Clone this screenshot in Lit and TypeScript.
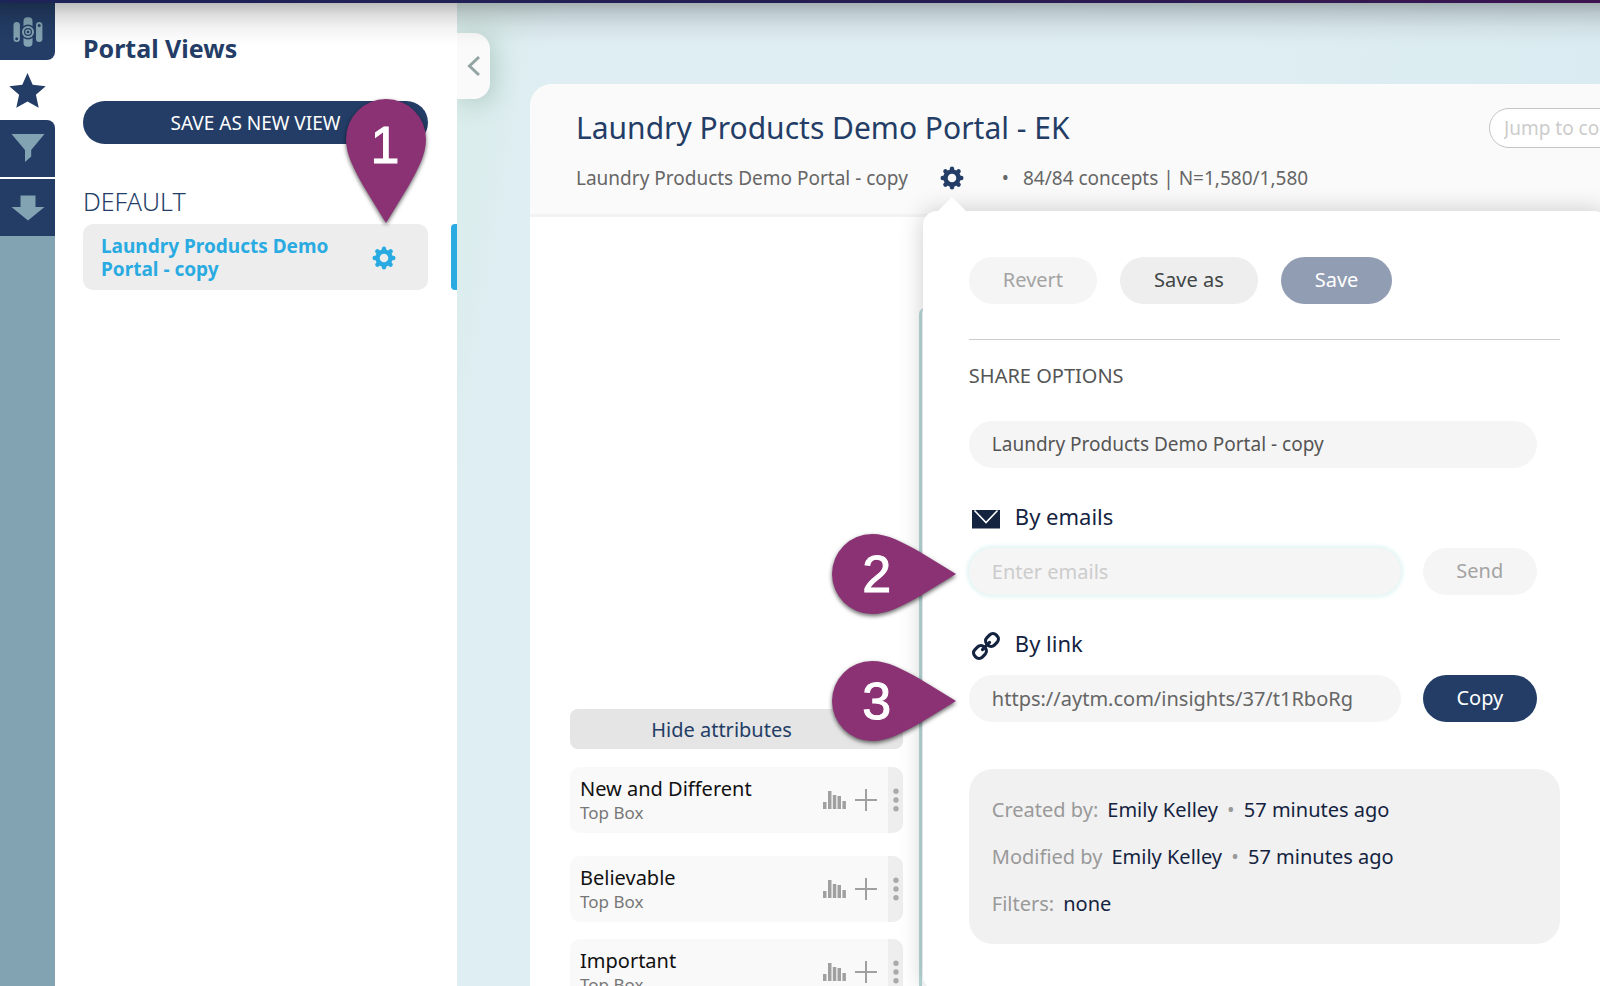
import { LitElement, html, css, svg, nothing } from "lit";
import { customElement, property } from "lit/decorators.js";

const teeth = [0, 45, 90, 135, 180, 225, 270, 315];

const gearIcon = html`<svg class="gear" viewBox="0 0 24 24" width="24" height="24" aria-hidden="true">
  <circle cx="12" cy="12" r="6.5" fill="none" stroke="currentColor" stroke-width="4.4" />
  ${teeth.map(
    (a) => svg`<path d="M12 5V2.7" stroke="currentColor" stroke-width="4.4" stroke-linecap="round" transform=${`rotate(${a} 12 12)`} />`
  )}
</svg>`;

const portalIcon = html`<svg viewBox="0 0 32 32" width="32" height="32" aria-hidden="true">
  <g fill="currentColor">
    <rect x="1.5" y="6" width="6.4" height="20" rx="3.2" />
    <rect x="11.5" y="1.2" width="9" height="29.6" rx="4" />
    <rect x="24" y="6" width="6.4" height="20" rx="3.2" />
  </g>
  <circle cx="4.7" cy="22.8" r="1.5" fill="#233d66" />
  <circle cx="27.2" cy="9.4" r="1.5" fill="#233d66" />
  <circle cx="16" cy="16" r="7.4" fill="#233d66" />
  <circle cx="16" cy="16" r="6" fill="currentColor" />
  <circle cx="16" cy="16" r="4" fill="#233d66" />
  <circle cx="16" cy="16" r="2.8" fill="currentColor" />
  <circle cx="16" cy="16" r="1.3" fill="#233d66" />
</svg>`;

const starIcon = html`<svg viewBox="0 0 38 38" width="38" height="38" aria-hidden="true">
  <path fill="currentColor" d="M18.500 2l5.200 11.800 13 1.400-9.800 8.600 2.800 13L18.500 30.600 7.300 36.800l2.800-13L.3 15.200l13-1.400z" />
</svg>`;

const filterIcon = html`<svg viewBox="0 0 34 30" width="34" height="30" aria-hidden="true">
  <path fill="currentColor" d="M.5 0h33L20.200 16v6.600L14 28V16z" />
</svg>`;

const downIcon = html`<svg viewBox="0 0 34 26" width="34" height="26" aria-hidden="true">
  <path fill="currentColor" d="M9.500.5h15V12h9L17 25.500.5 12h9z" />
</svg>`;

const mailIcon = html`<svg viewBox="0 0 28 28" width="28" height="28" aria-hidden="true">
  <rect y="5" width="28" height="18.500" fill="currentColor" />
  <path d="M2.500 5.500L14 17.500 25.500 5.500" fill="none" stroke="#fff" stroke-width="1.600" />
</svg>`;

const linkIcon = html`<svg viewBox="0 0 28 28" width="28" height="28" aria-hidden="true">
  <g fill="none" stroke="currentColor" stroke-width="3.200" transform="rotate(-45 14 14)">
    <rect x="-1" y="8.800" width="13" height="10.400" rx="4.600" />
    <rect x="16" y="8.800" width="13" height="10.400" rx="4.600" />
    <path d="M9 14h10" stroke-linecap="round" />
  </g>
</svg>`;

const chartIcon = html`<svg viewBox="0 0 23 20" width="23" height="20" aria-hidden="true">
  <path fill="currentColor" d="M0 12h3.500v7H0zM5 1h3.500v18H5zM9.800 5h3.500v14H9.800zM14.500 6h3.500v13h-3.500zM19.400 11h3.500v8h-3.500z" />
</svg>`;

const plusIcon = html`<svg viewBox="0 0 22 22" width="22" height="22" aria-hidden="true">
  <path d="M11 0v22M0 11h22" stroke="currentColor" stroke-width="2" />
</svg>`;

const dotsIcon = html`<svg viewBox="0 0 6 24" width="6" height="24" aria-hidden="true">
  <g fill="currentColor"><circle cx="3" cy="3.300" r="2.700" /><circle cx="3" cy="12" r="2.700" /><circle cx="3" cy="20.700" r="2.700" /></g>
</svg>`;

@customElement("step-pin")
class StepPin extends LitElement {
  @property({ type: Number }) step = 1;
  @property({ reflect: true }) direction: "down" | "right" = "down";

  static styles = css`
    :host {
      display: grid;
      width: 80px;
      height: 125px;
      color: #fff;
      font: 52px/80px "Liberation Sans", Arial, sans-serif;
      pointer-events: none;
    }
    :host([direction="right"]) {
      width: 125px;
      height: 80px;
    }
    .shape {
      grid-area: 1 / 1;
      overflow: visible;
      filter: drop-shadow(0 2px 2px rgba(0, 0, 0, 0.6));
    }
    .digit {
      grid-area: 1 / 1;
      width: 78px;
      text-align: center;
      z-index: 1;
      padding-top: 6px;
      -webkit-text-stroke: 1px #fff;
    }
    :host([direction="right"]) .digit {
      width: 90px;
      padding-top: 0;
    }
  `;

  render() {
    const right = this.direction === "right";
    return html`
      <svg class="shape" width=${right ? 125 : 80} height=${right ? 80 : 125} aria-hidden="true">
        <path
          fill="#8a3274"
          d=${right
            ? "M124 40L88 18C70 8 56 0 40 0A40 40 0 0 0 40 80C56 80 70 72 88 62Z"
            : "M40 124L18 88C8 70 0 56 0 40A40 40 0 0 1 80 40C80 56 72 70 62 88Z"}
        />
      </svg>
      <span class="digit">${this.step}</span>
    `;
  }
}

@customElement("attribute-row")
class AttributeRow extends LitElement {
  @property() name = "";
  @property() metric = "";

  static styles = css`
    :host {
      display: flex;
      height: 66px;
      border-radius: 10px;
      overflow: hidden;
      background: #f9f9f9;
      flex: none;
    }
    .text {
      flex: 1;
      padding: 9px 0 0 10px;
    }
    .name {
      font-size: 20px;
      line-height: 26px;
      color: #111;
    }
    .metric {
      font-size: 17px;
      line-height: 22px;
      color: #777;
    }
    button {
      border: 0;
      padding: 0;
      background: none;
      color: #a0a0a0;
      display: grid;
      place-items: center;
    }
    .chart {
      margin-right: 9px;
    }
    .add {
      margin-right: 11px;
    }
    .more {
      width: 15px;
      background: #eee;
      color: #aaa;
    }
  `;

  render() {
    return html`
      <div class="text">
        <div class="name">${this.name}</div>
        <div class="metric">${this.metric}</div>
      </div>
      <button class="chart" aria-label="Chart">${chartIcon}</button>
      <button class="add" aria-label="Add">${plusIcon}</button>
      <button class="more" aria-label="More">${dotsIcon}</button>
    `;
  }
}

@customElement("share-popover")
class SharePopover extends LitElement {
  static styles = css`
    :host {
      display: block;
      box-sizing: border-box;
      width: 685px;
      padding: 46px 48px 46px 46px;
      border-radius: 14px;
      background: #fff;
      box-shadow: 0 0 24px rgba(0, 0, 0, 0.2);
      color: #14233f;
      font-size: 20px;
      line-height: 24px;
    }
    :host::before {
      content: "";
      position: absolute;
      left: 14px;
      top: -14px;
      border: solid transparent;
      border-width: 0 15px 15px;
      border-bottom-color: #fff;
    }
    button,
    input {
      font: inherit;
      height: 47px;
      border: 0;
      border-radius: 24px;
      box-sizing: border-box;
    }
    button {
      background: #f5f5f5;
      color: #a3a3a3;
      padding: 0 34px;
    }
    .actions {
      display: flex;
      gap: 23px;
      padding-bottom: 35px;
      border-bottom: 1px solid #ccc;
    }
    .secondary {
      background: #eee;
      color: #404545;
    }
    .muted {
      background: #919db2;
      color: #fff;
    }
    .primary {
      background: #233d66;
      color: #fff;
    }
    h3 {
      margin: 24px 0 33px;
      font-size: 20px;
      line-height: 24px;
      font-weight: 400;
      color: #555;
    }
    .fields {
      padding-right: 23px;
    }
    input {
      display: block;
      width: 100%;
      min-width: 0;
      padding: 0 23px;
      background: #f5f5f5;
      color: #666;
    }
    input::placeholder {
      color: #ccc;
      opacity: 1;
    }
    .title {
      color: #555;
      font-size: 19px;
    }
    .caption {
      display: flex;
      align-items: flex-start;
      gap: 15px;
      padding-left: 3px;
      margin-top: 34px;
      height: 31px;
      font-size: 22px;
      line-height: 28px;
    }
    .caption svg {
      align-self: end;
    }
    .line {
      position: relative;
      display: grid;
      grid-template-columns: 1fr 114px;
      gap: 22px;
      margin-top: 15px;
    }
    .line button {
      padding: 0;
    }
    .focused {
      box-shadow: 0 0 4px 2px #dff3f3;
    }
    step-pin {
      position: absolute;
      right: calc(100% + 12px);
      top: -14px;
    }
    dl {
      margin: 47px 0 0;
      padding: 17px 23px;
      border-radius: 24px;
      background: #f1f1f1;
      line-height: 47px;
    }
    dl div {
      display: flex;
      gap: 9px;
    }
    dt {
      color: #999;
    }
    dd {
      margin: 0;
    }
    .dot {
      color: #999;
      margin: 0 4px;
    }
  `;

  private info(label: string, value: string, when?: string) {
    return html`<div>
      <dt>${label}</dt>
      <dd>${value}${when ? html` <span class="dot">•</span> ${when}` : nothing}</dd>
    </div>`;
  }

  render() {
    return html`
      <div class="actions">
        <button disabled>Revert</button>
        <button class="secondary">Save as</button>
        <button class="muted">Save</button>
      </div>
      <h3>SHARE OPTIONS</h3>
      <div class="fields">
        <input class="title" aria-label="View name" .value=${"Laundry Products Demo Portal - copy"} />
        <label class="caption" for="emails">${mailIcon} By emails</label>
        <div class="line">
          <input id="emails" class="focused" placeholder="Enter emails" />
          <button disabled>Send</button>
          <step-pin .step=${2} direction="right"></step-pin>
        </div>
        <label class="caption" for="link">${linkIcon} By link</label>
        <div class="line">
          <input id="link" readonly .value=${"https://aytm.com/insights/37/t1RboRg"} />
          <button class="primary">Copy</button>
          <step-pin .step=${3} direction="right"></step-pin>
        </div>
      </div>
      <dl>
        ${this.info("Created by:", "Emily Kelley", "57 minutes ago")}
        ${this.info("Modified by", "Emily Kelley", "57 minutes ago")}
        ${this.info("Filters:", "none")}
      </dl>
    `;
  }
}

@customElement("app-root")
class AppRoot extends LitElement {
  static styles = css`
    :host {
      display: flex;
      flex-direction: column;
      height: 100vh;
      overflow: hidden;
      font-family: "Noto Sans", "Open Sans", sans-serif;
      color: #233d66;
    }
    button {
      font: inherit;
      border: 0;
      padding: 0;
      background: none;
      color: inherit;
    }
    .topbar {
      position: relative;
      z-index: 5;
      flex: none;
      height: 3px;
      background: linear-gradient(90deg, #1d2458, #261c52 60%, #3c1450);
    }
    .topbar::after {
      content: "";
      position: absolute;
      top: 100%;
      left: 0;
      right: 0;
      height: 44px;
      pointer-events: none;
      background: linear-gradient(
        rgba(0, 0, 0, 0.26),
        rgba(0, 0, 0, 0.14) 25%,
        rgba(0, 0, 0, 0.05) 55%,
        rgba(0, 0, 0, 0.01) 85%,
        transparent
      );
    }
    .layout {
      flex: 1;
      min-height: 0;
      display: flex;
    }
    .rail {
      flex: none;
      width: 55px;
      background: #82a3b2;
      display: flex;
      flex-direction: column;
    }
    .rail button {
      height: 57px;
      display: grid;
      place-items: center;
      background: #233d66;
      color: #82a3b2;
    }
    .rail .views {
      height: 60px;
      background: #fff;
      color: #233d66;
    }
    .rail .home-cell,
    .rail .filter-cell {
      background: #fff;
      display: grid;
    }
    .rail .home-cell button {
      border-bottom-right-radius: 8px;
    }
    .rail .filter-cell button {
      border-top-right-radius: 8px;
    }
    .rail .filter-cell {
      padding-bottom: 2px;
    }
    .panel {
      flex: none;
      width: 402px;
      box-sizing: border-box;
      padding: 26px 29px 0 28px;
      background: #fff;
    }
    h1 {
      margin: 0;
      font-size: 25px;
      line-height: 38px;
      font-weight: 700;
    }
    .save-new {
      display: block;
      width: 100%;
      height: 43px;
      margin: 34px 0 37px;
      border-radius: 22px;
      background: #233d66;
      color: #fff;
      font-size: 19px;
    }
    h2 {
      margin: 0;
      font-size: 25px;
      line-height: 40px;
      font-weight: 300;
    }
    .view {
      position: relative;
      display: flex;
      align-items: center;
      justify-content: space-between;
      box-sizing: border-box;
      height: 66px;
      margin-top: 3px;
      padding: 2px 32px 0 18px;
      border-radius: 10px;
      background: #ededed;
      color: #29abe2;
      font-size: 19px;
      line-height: 23px;
      font-weight: 700;
    }
    .view a {
      width: 250px;
      color: inherit;
      text-decoration: none;
    }
    .view::after {
      content: "";
      position: absolute;
      right: -29px;
      top: 0;
      bottom: 0;
      width: 6px;
      border-radius: 4px 0 0 4px;
      background: #29abe2;
    }
    .view button {
      display: grid;
    }
    .view step-pin {
      position: absolute;
      right: 2px;
      bottom: 100%;
      z-index: 6;
    }
    main {
      flex: 1;
      min-width: 0;
      overflow: hidden;
      display: flex;
      align-items: stretch;
      background: linear-gradient(100deg, #d9ece9, #dfeef3 8%, #deeef3 60%, #d8eaf0);
    }
    .collapse {
      flex: none;
      width: 33px;
      height: 66px;
      margin: 30px 40px 0 0;
      display: grid;
      place-items: center;
      border-radius: 0 16px 16px 0;
      background: #fafafa;
      color: #93a5a3;
      box-shadow: 4px 4px 24px rgba(80, 130, 110, 0.3);
      clip-path: inset(-40px -40px -40px 0);
    }
    .card {
      flex: 1 0 1202px;
      margin-top: 81px;
      display: flex;
      flex-direction: column;
      border-top-left-radius: 22px;
      background: #fff;
    }
    .card header {
      display: flex;
      justify-content: space-between;
      align-items: flex-start;
      padding: 22px 46px 18px;
      border-bottom: 3px solid #f3f3f3;
      border-top-left-radius: 22px;
      background: #fafafa;
    }
    .card h1 {
      font-size: 30px;
      line-height: 44px;
      font-weight: 400;
    }
    .meta {
      display: flex;
      align-items: center;
      height: 37px;
      padding-top: 9px;
      font-size: 19px;
      color: #666;
      white-space: nowrap;
    }
    .settings {
      position: relative;
      z-index: 2;
      margin: 0 38px 0 32px;
      color: #233d66;
    }
    .settings button {
      display: grid;
    }
    share-popover {
      position: absolute;
      left: -17px;
      top: 45px;
      white-space: normal;
    }
    .dot {
      margin-right: 14px;
    }
    .jump {
      box-sizing: border-box;
      width: 197px;
      height: 40px;
      margin-top: 2px;
      padding: 0 14px;
      border: 1px solid #c4c4c4;
      border-radius: 20px;
      background: #fff;
      font: inherit;
      font-size: 19px;
    }
    .jump::placeholder {
      color: #ccc;
      opacity: 1;
    }
    .board {
      flex: 1;
      min-height: 0;
      display: flex;
      gap: 16px;
      padding-left: 40px;
      overflow: hidden;
    }
    .attributes {
      flex: none;
      width: 333px;
      padding-top: 492px;
      display: flex;
      flex-direction: column;
    }
    .hide {
      flex: none;
      height: 40px;
      margin-bottom: 18px;
      padding-right: 30px;
      border-radius: 8px;
      background: #e5e5e5;
      font-size: 20px;
    }
    .group {
      display: grid;
      gap: 17px;
    }
    .group + .group {
      margin-top: 23px;
    }
    .concept {
      flex: 1;
      margin-top: 91px;
      border-left: 3px solid #b5d9d8;
      border-top-left-radius: 6px;
    }
  `;

  render() {
    return html`
      <div class="topbar"></div>
      <div class="layout">
        <nav class="rail" aria-label="Tools">
          <div class="home-cell"><button aria-label="Portal">${portalIcon}</button></div>
          <button class="views" aria-label="Views">${starIcon}</button>
          <div class="filter-cell"><button aria-label="Filter">${filterIcon}</button></div>
          <button aria-label="Download">${downIcon}</button>
        </nav>
        <aside class="panel">
          <h1>Portal Views</h1>
          <button class="save-new">SAVE AS NEW VIEW</button>
          <h2>DEFAULT</h2>
          <div class="view">
            <a href="#copy">Laundry Products Demo Portal - copy</a>
            <button aria-label="View settings">${gearIcon}</button>
            <step-pin .step=${1}></step-pin>
          </div>
        </aside>
        <main>
          <button class="collapse" aria-label="Collapse">
            <svg width="14" height="22" viewBox="0 0 14 22" aria-hidden="true">
              <path d="M12 2L2.500 11l9.500 9" fill="none" stroke="currentColor" stroke-width="3" />
            </svg>
          </button>
          <section class="card">
            <header>
              <div>
                <h1>Laundry Products Demo Portal - EK</h1>
                <div class="meta">
                  <span>Laundry Products Demo Portal - copy</span>
                  <div class="settings">
                    <button aria-label="Settings">${gearIcon}</button>
                    <share-popover></share-popover>
                  </div>
                  <span class="dot">•</span>
                  <span>84/84 concepts | N=1,580/1,580</span>
                </div>
              </div>
              <input class="jump" aria-label="Jump to concept" placeholder="Jump to concept" />
            </header>
            <div class="board">
              <div class="attributes">
                <button class="hide">Hide attributes</button>
                <div class="group">
                  <attribute-row name="New and Different" metric="Top Box"></attribute-row>
                </div>
                <div class="group">
                  <attribute-row name="Believable" metric="Top Box"></attribute-row>
                  <attribute-row name="Important" metric="Top Box"></attribute-row>
                </div>
              </div>
              <div class="concept"></div>
            </div>
          </section>
        </main>
      </div>
    `;
  }
}
